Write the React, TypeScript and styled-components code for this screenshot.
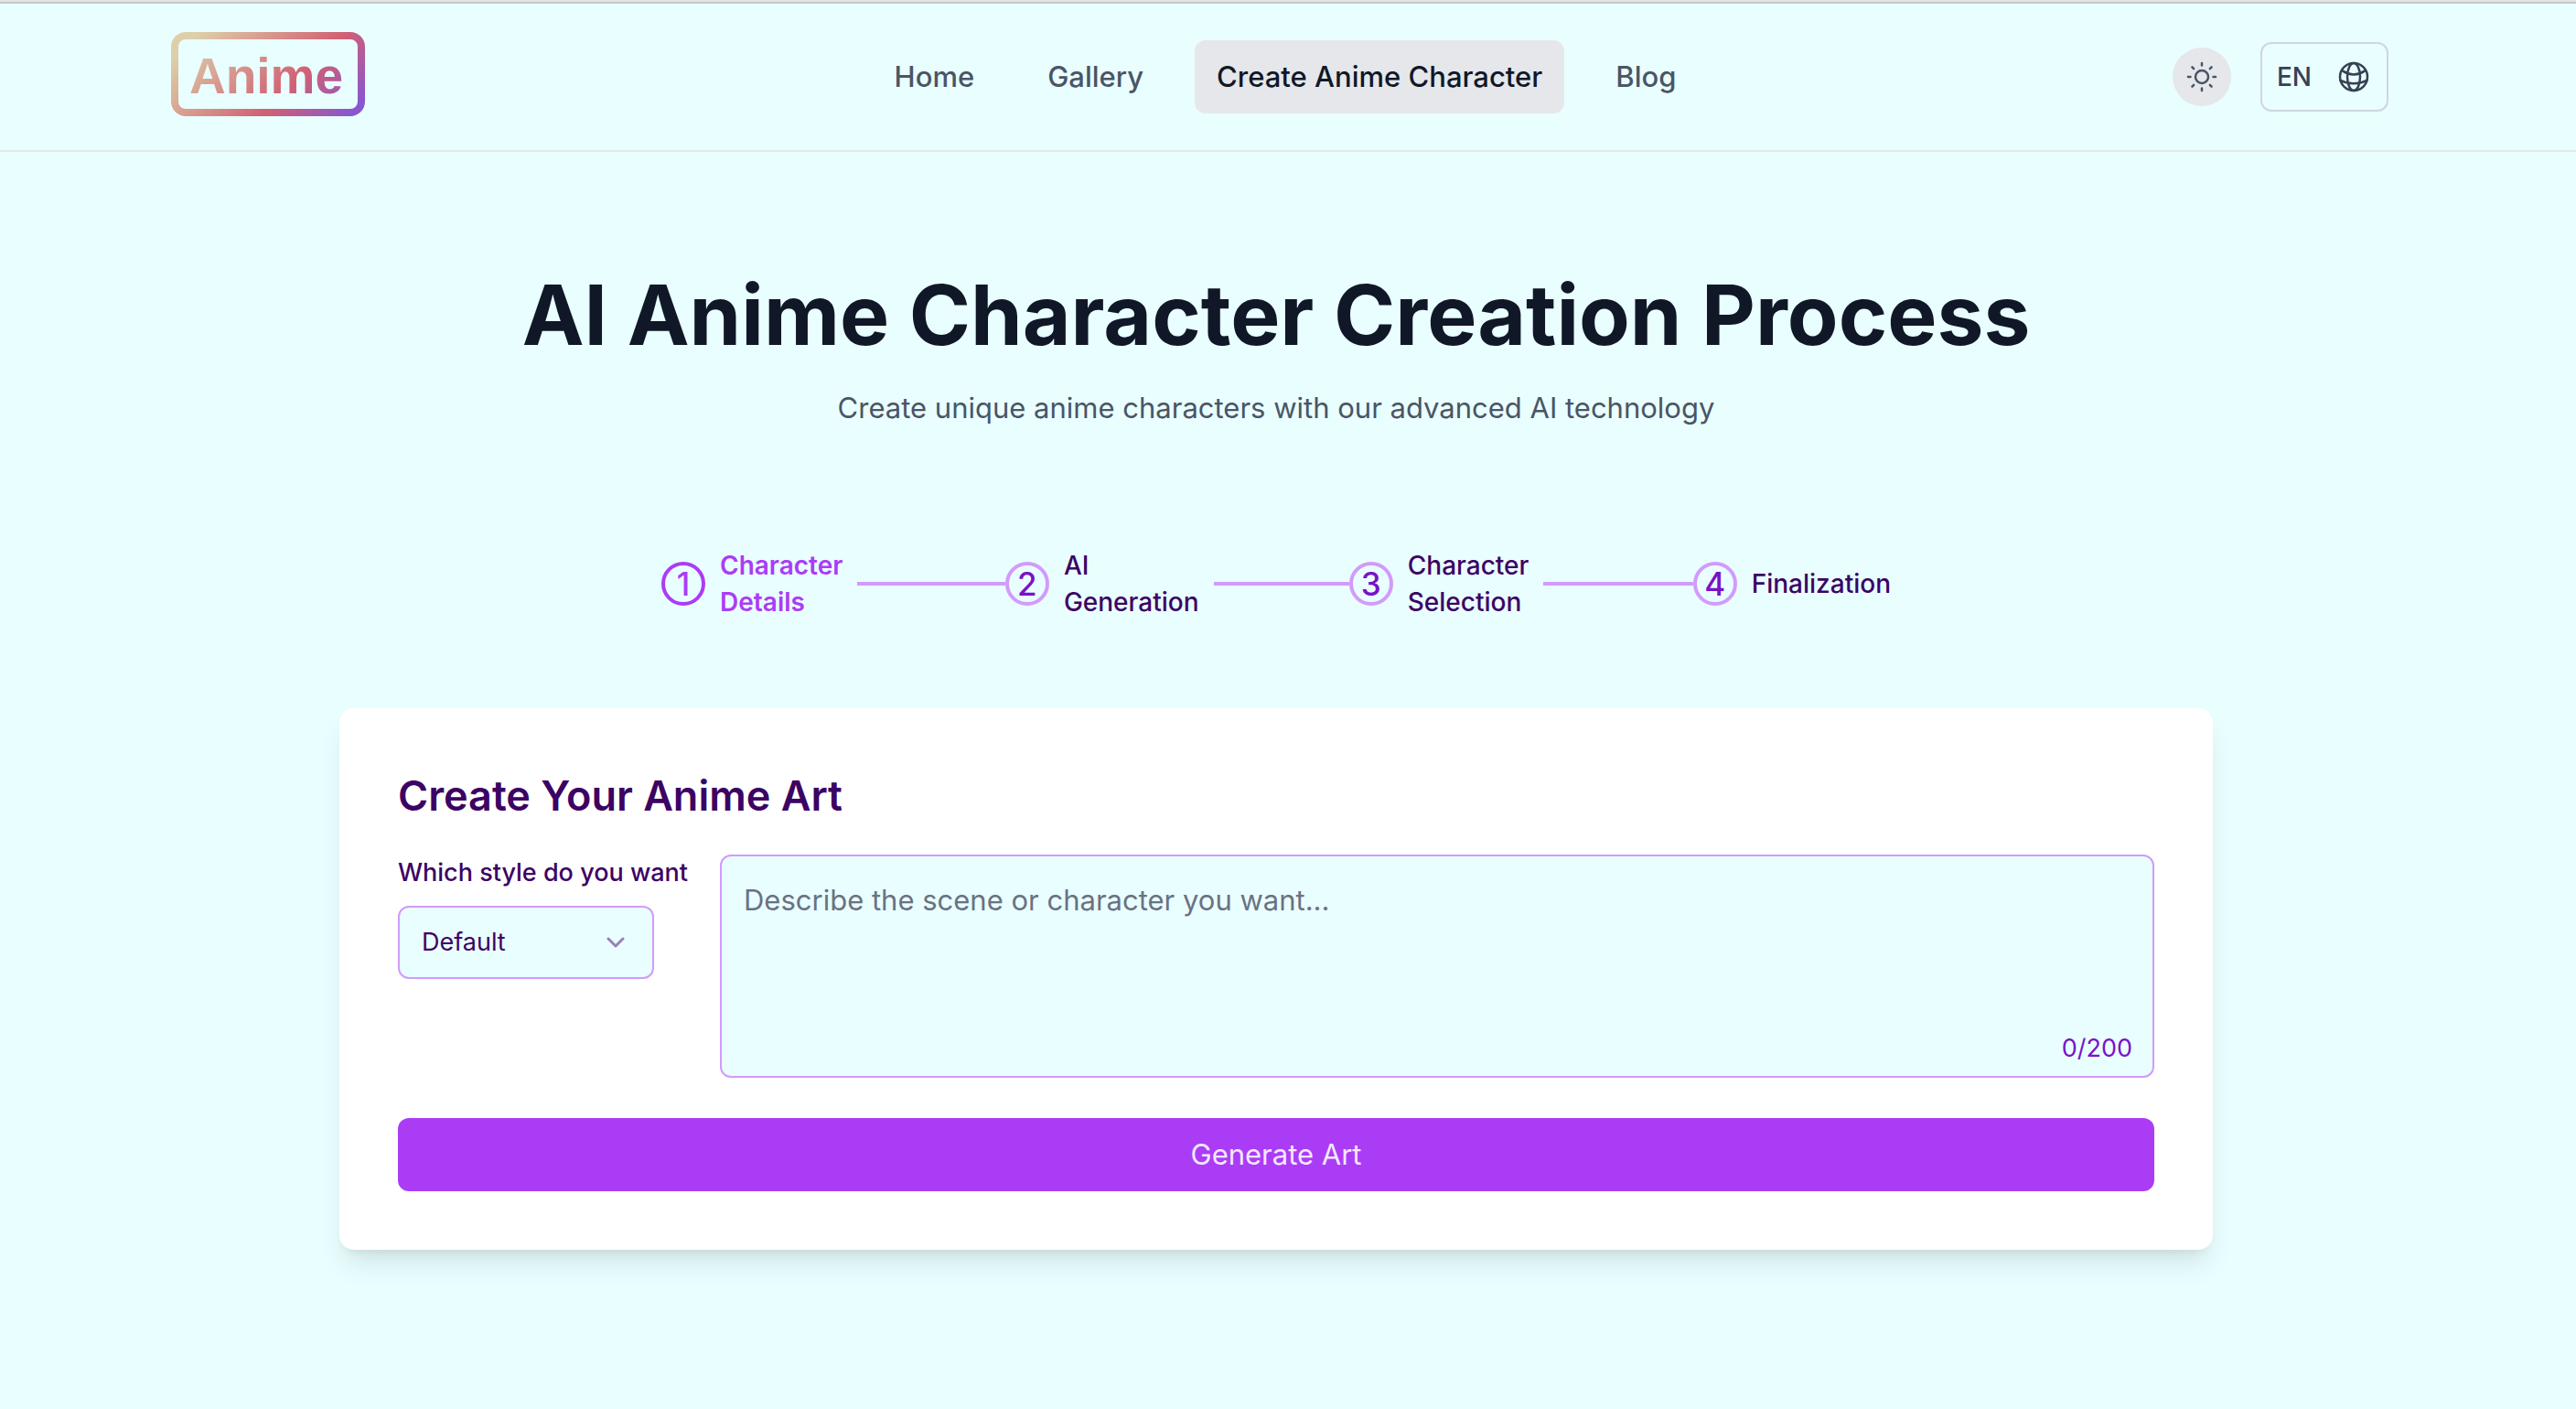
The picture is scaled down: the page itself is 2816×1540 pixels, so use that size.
import React, { useState } from "react";
import styled, { createGlobalStyle } from "styled-components";

const GlobalStyle = createGlobalStyle`
  *, *::before, *::after { box-sizing: border-box; }
  html { background: #e9feff; }
  body {
    margin: 0;
    min-height: 100vh;
    background: #e9feff;
    color: #3c0364;
    font-family: Inter, "Liberation Sans", sans-serif;
    font-size: 28px;
    line-height: 40px;
  }
  button, select, textarea { font: inherit; color: inherit; margin: 0; }
  h1, h2, p, ol { margin: 0; padding: 0; }
`;

const Page = styled.div`
  display: flex;
  flex-direction: column;
  min-height: 100vh;
  border-top: 2px solid #e2e3e3;
`;

const Header = styled.header`
  border-top: 2px solid #c3c8c9;
  border-bottom: 2px solid #e5e7eb;
  padding-right: 26px;
`;

const HeaderInner = styled.div`
  display: flex;
  align-items: center;
  justify-content: space-between;
  max-width: 2560px;
  height: 160px;
  margin: 0 auto;
  padding: 0 64px;
`;

const LogoLink = styled.a`
  width: 256px;
  padding: 0 8px 6px;
  svg { display: block; }
`;

const Nav = styled.nav`
  display: flex;
  gap: 32px;
`;

const NavLink = styled.a<{ $active?: boolean }>`
  padding: 20px 24px;
  border-radius: 12px;
  font-size: 31px;
  font-weight: 500;
  text-decoration: none;
  color: ${(p) => (p.$active ? "#101828" : "#4a5565")};
  background: ${(p) => (p.$active ? "#e5e7eb" : "transparent")};
`;

const Tools = styled.div`
  display: flex;
  align-items: center;
  gap: 32px;
`;

const ThemeButton = styled.button`
  display: grid;
  place-items: center;
  width: 64px;
  height: 64px;
  padding: 0;
  border: 0;
  border-radius: 50%;
  background: #e5e7eb;
  color: #4a5565;
`;

const LanguageButton = styled.button`
  display: flex;
  align-items: center;
  justify-content: space-between;
  width: 140px;
  height: 76px;
  padding: 0 16px;
  border: 2px solid #d1d5dc;
  border-radius: 12px;
  background: transparent;
  color: #364153;
  font-weight: 500;
`;

const Main = styled.main`
  display: flex;
  flex-direction: column;
  align-items: center;
  padding: 128px 90px 128px 64px;
`;

const Title = styled.h1`
  color: #101828;
  font-size: 91px;
  line-height: 100px;
  font-weight: 700;
  text-align: center;
`;

const Subtitle = styled.p`
  margin-top: 32px;
  color: #4a5565;
  font-size: 31px;
  text-align: center;
`;

const Steps = styled.ol`
  display: flex;
  width: 100%;
  max-width: 1344px;
  margin-top: 132px;
  list-style: none;
`;

const StepItem = styled.li<{ $last: boolean }>`
  display: flex;
  align-items: center;
  flex: ${(p) => (p.$last ? "none" : "1 1 0")};
  height: 80px;
`;

const StepNumber = styled.span<{ $current: boolean }>`
  display: grid;
  place-items: center;
  flex: none;
  width: 48px;
  height: 48px;
  border: 4px solid ${(p) => (p.$current ? "#ab3cf6" : "#d29bfb")};
  border-radius: 50%;
  color: ${(p) => (p.$current ? "#ab3cf6" : "#7a12c8")};
  font-size: 35px;
  font-weight: 500;
`;

const StepLabel = styled.span<{ $current: boolean }>`
  flex: none;
  width: min-content;
  margin-left: 16px;
  color: ${(p) => (p.$current ? "#ab3cf6" : "#3c0364")};
  font-weight: ${(p) => (p.$current ? 600 : 500)};
`;

const StepLine = styled.span`
  flex: 1;
  height: 4px;
  margin-left: 16px;
  background: #d29bfb;
`;

const Card = styled.form`
  width: 100%;
  max-width: 2048px;
  margin-top: 96px;
  padding: 64px;
  border-radius: 16px;
  background: #fff;
  box-shadow: 0 20px 30px -6px rgba(0, 0, 0, 0.1), 0 8px 12px -8px rgba(0, 0, 0, 0.1);
`;

const CardTitle = styled.h2`
  color: #3c0364;
  font-size: 45px;
  line-height: 64px;
  font-weight: 600;
`;

const Fields = styled.div`
  display: flex;
  gap: 32px;
  margin-top: 32px;
`;

const StyleField = styled.div`
  display: flex;
  flex-direction: column;
  flex: none;
  gap: 16px;
  min-width: 320px;
`;

const FieldLabel = styled.label`
  color: #3c0364;
  font-size: 27px;
  font-weight: 500;
`;

const SelectBox = styled.div`
  position: relative;
  width: 280px;
  svg {
    position: absolute;
    right: 24px;
    top: 24px;
    pointer-events: none;
  }
`;

const Select = styled.select`
  appearance: none;
  width: 100%;
  height: 80px;
  padding: 0 24px;
  border: 2px solid #d29bfb;
  border-radius: 12px;
  background: #e9feff;
  color: #3c0364;
  font-size: 27px;
`;

const PromptBox = styled.div`
  position: relative;
  display: flex;
  flex: 1;
`;

const Prompt = styled.textarea`
  width: 100%;
  height: 244px;
  padding: 28px 24px;
  border: 2px solid #d29bfb;
  border-radius: 12px;
  background: #e9feff;
  font-size: 31px;
  line-height: 40px;
  resize: none;
  &::placeholder { color: #6a7282; opacity: 1; }
`;

const Counter = styled.span`
  position: absolute;
  right: 24px;
  bottom: 12px;
  color: #7a12c8;
  font-size: 27px;
`;

const SubmitButton = styled.button`
  display: block;
  width: 100%;
  height: 80px;
  margin-top: 44px;
  border: 0;
  border-radius: 12px;
  background: #ab3cf6;
  color: #f3e8ff;
  font-size: 31px;
`;

const Logo = () => (
  <svg width="212" height="92" viewBox="0 0 212 92" role="img" aria-label="Anime">
    <defs>
      <linearGradient id="logoGradient" gradientUnits="userSpaceOnUse" x1="15" y1="15" x2="143" y2="143">
        <stop offset="0" stopColor="#ddd0a8" />
        <stop offset="0.63" stopColor="#d16073" />
        <stop offset="1" stopColor="#8857cf" />
      </linearGradient>
    </defs>
    <rect x="4" y="4" width="204" height="84" rx="12" fill="none" stroke="url(#logoGradient)" strokeWidth="8" />
    <text
      x="104"
      y="67"
      textAnchor="middle"
      fontFamily='"Liberation Sans", Arial, sans-serif'
      fontSize="55"
      fontWeight="700"
      fill="url(#logoGradient)"
    >
      Anime
    </text>
  </svg>
);

const SunIcon = () => (
  <svg width="40" height="40" viewBox="0 0 24 24" fill="none" stroke="currentColor" strokeWidth="1.5" strokeLinecap="round" aria-hidden="true">
    <circle cx="12" cy="12" r="4.2" />
    <path d="M12 3v1.5M12 19.5V21M3 12h1.5M19.5 12H21M5.64 5.64l1.06 1.06M17.3 17.3l1.06 1.06M5.64 18.36l1.06-1.06M17.3 6.7l1.06-1.06" />
  </svg>
);

const GlobeIcon = () => (
  <svg width="40" height="40" viewBox="0 0 24 24" fill="none" stroke="currentColor" strokeWidth="1.5" strokeLinecap="round" strokeLinejoin="round" aria-hidden="true">
    <circle cx="12" cy="12" r="9" />
    <ellipse cx="12" cy="12" rx="4.2" ry="9" />
    <path d="M4.9 8.2A14 14 0 0 0 12 10.5a14 14 0 0 0 7.1-2.3M3.3 14.3A18 18 0 0 0 12 16.3a18 18 0 0 0 8.7-2" />
  </svg>
);

const ChevronIcon = () => (
  <svg width="32" height="32" viewBox="0 0 32 32" fill="none" stroke="#9a7fb5" strokeWidth="3" strokeLinecap="round" strokeLinejoin="round" aria-hidden="true">
    <path d="m6 12 8 8 8-8" />
  </svg>
);

const links = ["Home", "Gallery", "Create Anime Character", "Blog"];
const steps = ["Character Details", "AI Generation", "Character Selection", "Finalization"];
const styles = ["Default", "Shonen", "Shojo", "Chibi"];
const limit = 200;

export default function App() {
  const [prompt, setPrompt] = useState("");
  return (
    <Page>
      <GlobalStyle />
      <Header>
        <HeaderInner>
          <LogoLink href="#">
            <Logo />
          </LogoLink>
          <Nav>
            {links.map((name) => (
              <NavLink key={name} href="#" $active={name === links[2]}>
                {name}
              </NavLink>
            ))}
          </Nav>
          <Tools>
            <ThemeButton type="button" aria-label="Toggle theme">
              <SunIcon />
            </ThemeButton>
            <LanguageButton type="button">
              EN
              <GlobeIcon />
            </LanguageButton>
          </Tools>
        </HeaderInner>
      </Header>
      <Main>
        <Title>AI Anime Character Creation Process</Title>
        <Subtitle>Create unique anime characters with our advanced AI technology</Subtitle>
        <Steps>
          {steps.map((name, i) => (
            <StepItem key={name} $last={i === steps.length - 1}>
              <StepNumber $current={i === 0}>{i + 1}</StepNumber>
              <StepLabel $current={i === 0}>{name}</StepLabel>
              {i < steps.length - 1 && <StepLine />}
            </StepItem>
          ))}
        </Steps>
        <Card onSubmit={(e) => e.preventDefault()}>
          <CardTitle>Create Your Anime Art</CardTitle>
          <Fields>
            <StyleField>
              <FieldLabel htmlFor="art-style">Which style do you want</FieldLabel>
              <SelectBox>
                <Select id="art-style">
                  {styles.map((name) => (
                    <option key={name}>{name}</option>
                  ))}
                </Select>
                <ChevronIcon />
              </SelectBox>
            </StyleField>
            <PromptBox>
              <Prompt
                aria-label="Scene or character description"
                placeholder="Describe the scene or character you want..."
                maxLength={limit}
                value={prompt}
                onChange={(e) => setPrompt(e.target.value)}
              />
              <Counter>
                {prompt.length}/{limit}
              </Counter>
            </PromptBox>
          </Fields>
          <SubmitButton type="submit">Generate Art</SubmitButton>
        </Card>
      </Main>
    </Page>
  );
}
